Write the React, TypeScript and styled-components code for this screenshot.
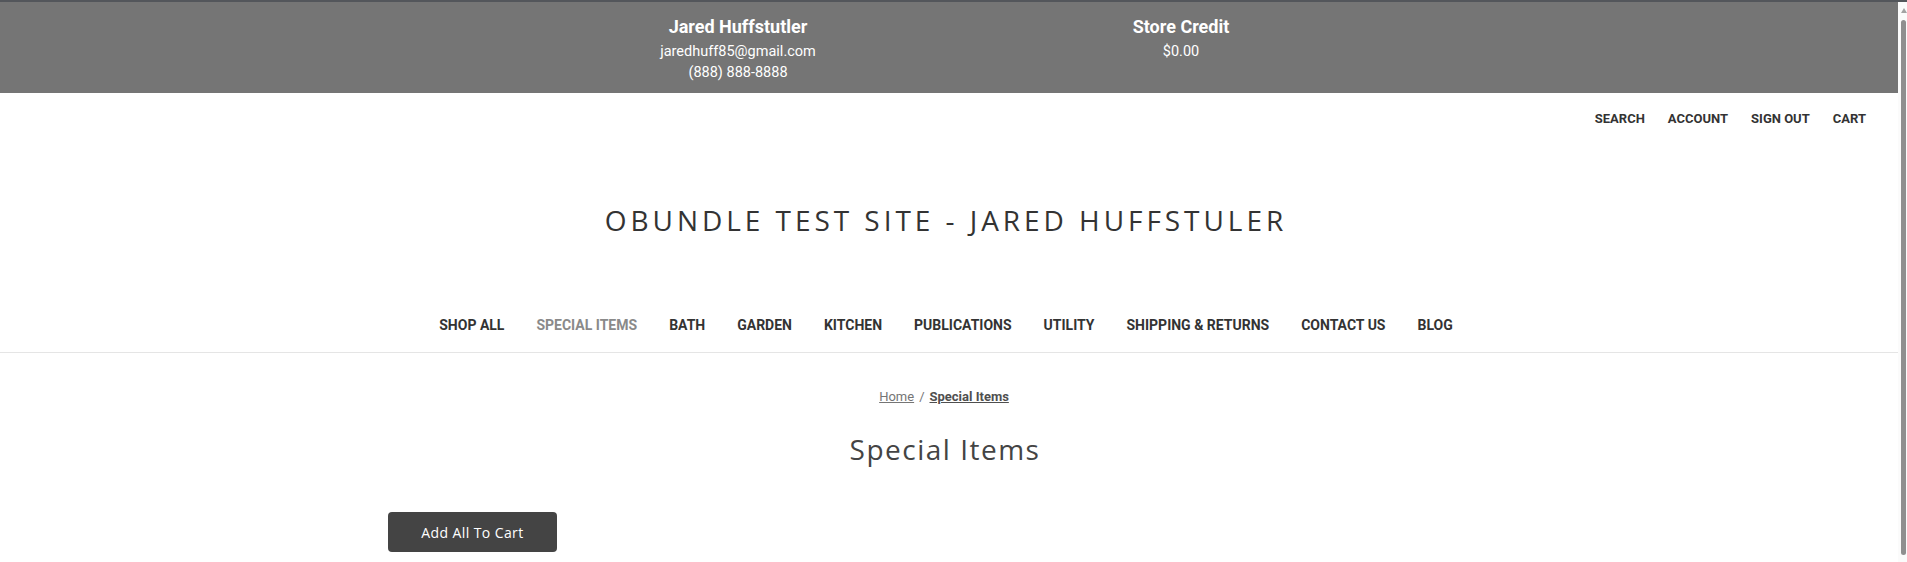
import React from "react";
import styled, { createGlobalStyle } from "styled-components";

const GlobalStyle = createGlobalStyle`
  html, body { margin: 0; padding: 0; background: #fff; }
  body { font-family: Roboto, "Liberation Sans", sans-serif; }
  * { box-sizing: border-box; }
`;

const Page = styled.div`
  display: flex;
  flex-direction: column;
  height: 562px;
  overflow: hidden;
`;

const Strip = styled.div`
  height: 2px;
  flex: none;
  background: #53565b;
`;

const Frame = styled.div`
  display: flex;
  flex: 1;
  min-height: 0;
`;

const Main = styled.div`
  flex: 1;
  min-width: 0;
  display: flex;
  flex-direction: column;
`;

const Rail = styled.div`
  width: 9px;
  flex: none;
  display: flex;
  flex-direction: column;
  align-items: stretch;
  padding: 6px 1px 7px 3px;
  background: #fbfbfb;
`;

const RailArrow = styled.div`
  align-self: center;
  width: 0;
  height: 0;
  border-left: 3px solid transparent;
  border-right: 3px solid transparent;
  border-bottom: 5px solid #a3a3a3;
  margin-bottom: 7px;
`;

const RailThumb = styled.div`
  flex: 1;
  background: #8f8f8f;
  border-radius: 3px;
`;

const TopBar = styled.div`
  height: 91px;
  flex: none;
  background: #757575;
  display: flex;
  justify-content: center;
  padding: 14px 0 0 21px;
  color: #fff;
`;

const InfoColumn = styled.div`
  width: 443px;
  display: flex;
  flex-direction: column;
  align-items: center;
`;

const InfoTitle = styled.div`
  font-size: 18px;
  font-weight: 700;
  line-height: 22px;
  margin-bottom: 3px;
`;

const InfoLine = styled.div`
  font-size: 14.5px;
  line-height: 21px;
`;

const UtilNav = styled.nav`
  height: 50px;
  flex: none;
  display: flex;
  justify-content: flex-end;
  align-items: center;
  gap: 23px;
  padding-right: 32px;
`;

const UtilLink = styled.a`
  font-size: 13px;
  font-weight: 700;
  color: #333;
  text-decoration: none;
  text-transform: uppercase;
`;

const Logo = styled.div`
  height: 154px;
  flex: none;
  display: flex;
  align-items: center;
  justify-content: center;
  padding-right: 6px;
`;

const LogoText = styled.h1`
  margin: 0;
  font-family: "Open Sans", sans-serif;
  font-weight: 400;
  font-size: 28px;
  letter-spacing: 3.95px;
  color: #333;
`;

const MainNav = styled.nav`
  height: 56px;
  flex: none;
  display: flex;
  justify-content: center;
  align-items: center;
  border-bottom: 1px solid #e5e5e5;
  padding-right: 6px;
`;

const NavLink = styled.a<{ $active?: boolean }>`
  padding: 0 16px;
  font-size: 14px;
  font-weight: 700;
  color: ${(p) => (p.$active ? "#8a8a8a" : "#333")};
  text-decoration: none;
  white-space: nowrap;
`;

const Body = styled.main`
  display: flex;
  flex-direction: column;
  padding-top: 34px;
`;

const Breadcrumbs = styled.div`
  display: flex;
  justify-content: center;
  gap: 5px;
  font-size: 13px;
  line-height: 20px;
  color: #757575;
  padding-right: 10px;
`;

const Crumb = styled.a<{ $current?: boolean }>`
  color: ${(p) => (p.$current ? "#4f4f4f" : "#757575")};
  font-weight: ${(p) => (p.$current ? 700 : 400)};
  text-decoration: underline;
`;

const Heading = styled.h2`
  margin: 22px 0 0;
  text-align: center;
  font-family: "Open Sans", sans-serif;
  font-weight: 400;
  font-size: 28px;
  line-height: 40px;
  letter-spacing: 1.5px;
  color: #444;
  padding-right: 8px;
`;

const Actions = styled.div`
  margin-top: 43px;
  padding-left: 388px;
`;

const Button = styled.button`
  width: 169px;
  height: 40px;
  border: none;
  border-radius: 4px;
  background: #444;
  color: #fff;
  font-family: "Open Sans", sans-serif;
  font-size: 14px;
  letter-spacing: 0.4px;
  cursor: pointer;
`;

const navItems = [
  "SHOP ALL",
  "SPECIAL ITEMS",
  "BATH",
  "GARDEN",
  "KITCHEN",
  "PUBLICATIONS",
  "UTILITY",
  "SHIPPING & RETURNS",
  "CONTACT US",
  "BLOG",
];

export default function App() {
  return (
    <>
      <GlobalStyle />
      <Page>
        <Strip />
        <Frame>
          <Main>
            <TopBar>
              <InfoColumn>
                <InfoTitle>Jared Huffstutler</InfoTitle>
                <InfoLine>jaredhuff85@gmail.com</InfoLine>
                <InfoLine>(888) 888-8888</InfoLine>
              </InfoColumn>
              <InfoColumn>
                <InfoTitle>Store Credit</InfoTitle>
                <InfoLine>$0.00</InfoLine>
              </InfoColumn>
            </TopBar>
            <UtilNav>
              <UtilLink href="#">Search</UtilLink>
              <UtilLink href="#">Account</UtilLink>
              <UtilLink href="#">Sign Out</UtilLink>
              <UtilLink href="#">Cart</UtilLink>
            </UtilNav>
            <Logo>
              <LogoText>OBUNDLE TEST SITE - JARED HUFFSTULER</LogoText>
            </Logo>
            <MainNav>
              {navItems.map((n) => (
                <NavLink key={n} href="#" $active={n === "SPECIAL ITEMS"}>
                  {n}
                </NavLink>
              ))}
            </MainNav>
            <Body>
              <Breadcrumbs>
                <Crumb href="#">Home</Crumb>
                <span>/</span>
                <Crumb href="#" $current>
                  Special Items
                </Crumb>
              </Breadcrumbs>
              <Heading>Special Items</Heading>
              <Actions>
                <Button>Add All To Cart</Button>
              </Actions>
            </Body>
          </Main>
          <Rail>
            <RailArrow />
            <RailThumb />
          </Rail>
        </Frame>
      </Page>
    </>
  );
}
